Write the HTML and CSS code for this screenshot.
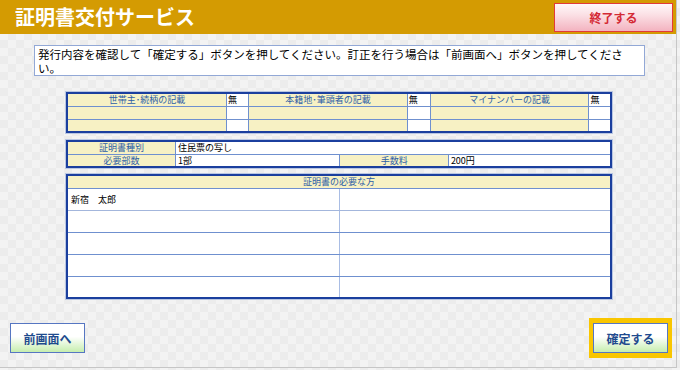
FILE: index.html
```html
<!DOCTYPE html>
<html lang="ja">

    <head>
        <meta charset="UTF-8">
        <title>証明書交付サービス</title>
        <link rel="stylesheet" href="styles.css">
    </head>

    <body>
        <div class="screen">
            <header class="title-bar">
                <h1 class="title">証明書交付サービス</h1>
                <button class="btn-exit">終了する</button>
            </header>

            <p class="message">発行内容を確認して「確定する」ボタンを押してください。訂正を行う場合は「前画面へ」ボタンを押してください。</p>

            <!-- 記載事項 -->
            <table class="grid grid-notes">
                <colgroup>
                    <col style="width: 159px">
                    <col style="width: 22px">
                    <col style="width: 158px">
                    <col style="width: 23px">
                    <col style="width: 158px">
                    <col style="width: 22px">
                </colgroup>
                <tr>
                    <th>世帯主･続柄の記載</th>
                    <td class="flag">無</td>
                    <th>本籍地･筆頭者の記載</th>
                    <td class="flag">無</td>
                    <th>マイナンバーの記載</th>
                    <td class="flag">無</td>
                </tr>
                <tr>
                    <td class="fill"></td>
                    <td></td>
                    <td class="fill"></td>
                    <td></td>
                    <td class="fill"></td>
                    <td></td>
                </tr>
                <tr>
                    <td class="fill"></td>
                    <td></td>
                    <td class="fill"></td>
                    <td></td>
                    <td class="fill"></td>
                    <td></td>
                </tr>
            </table>

            <!-- 証明書の内容 -->
            <table class="grid grid-cert">
                <colgroup>
                    <col style="width: 108px">
                    <col style="width: 164px">
                    <col style="width: 108px">
                    <col style="width: 162px">
                </colgroup>
                <tr>
                    <th>証明書種別</th>
                    <td colspan="3">住民票の写し</td>
                </tr>
                <tr>
                    <th>必要部数</th>
                    <td>1部</td>
                    <th>手数料</th>
                    <td>200円</td>
                </tr>
            </table>

            <!-- 必要な方 -->
            <table class="grid grid-people">
                <tr>
                    <th colspan="2">証明書の必要な方</th>
                </tr>
                <tr class="first">
                    <td>新宿　太郎</td>
                    <td></td>
                </tr>
                <tr>
                    <td></td>
                    <td></td>
                </tr>
                <tr>
                    <td></td>
                    <td></td>
                </tr>
                <tr>
                    <td></td>
                    <td></td>
                </tr>
                <tr>
                    <td></td>
                    <td></td>
                </tr>
            </table>

            <footer class="actions">
                <button class="btn">前画面へ</button>
                <div class="confirm-frame">
                    <button class="btn">確定する</button>
                </div>
            </footer>
        </div>
    </body>

</html>
```

FILE: styles.css
```css
* {
    padding: 0;
    margin: 0;
    box-sizing: border-box;
}

body {
    width: 677px;
    height: 368px;
    border-right: 1px solid #c6c6c6;
    border-bottom: 1px solid #c6c6c6;
    background: repeating-conic-gradient(#ececec 0 25%, #f3f3f3 0 50%) 0 0 / 16px 16px;
    font-family: "Noto Sans CJK JP", sans-serif;
    color: #000;
}

.screen {
    height: 367px;
    display: flex;
    flex-direction: column;
}

/* header */
.title-bar {
    height: 34px;
    flex-shrink: 0;
    display: flex;
    justify-content: space-between;
    align-items: flex-start;
    padding: 3px 3px 0 15px;
    background-color: #d49b02;
}

.title {
    font-size: 20px;
    font-weight: bold;
    line-height: 28px;
    color: #fff;
}

.btn-exit {
    width: 119px;
    height: 29px;
    border: 1px solid #e23a3a;
    background: linear-gradient(#fff8f9 0%, #fbe0e5 40%, #f3b3c0 100%);
    color: #d42a35;
    font-family: inherit;
    font-size: 12px;
    font-weight: bold;
}

/* message */
.message {
    width: 611px;
    height: 31px;
    margin: 11px 0 0 34px;
    padding: 1px 3px;
    border: 1px solid #92a8d6;
    background-color: #fff;
    font-size: 11.5px;
    line-height: 14px;
}

/* tables */
.grid {
    width: 546px;
    margin-left: 66px;
    border-collapse: collapse;
    table-layout: fixed;
    border: 2px solid #1b3f9e;
    box-shadow: 0 0 0 1px #b9c6e2;
    background-color: #fff;
    font-size: 9px;
}

.grid th,
.grid td {
    border: 1px solid #6f90cf;
    padding: 0 2px;
    height: 13px;
    line-height: 11px;
    text-align: left;
    white-space: nowrap;
    overflow: hidden;
}

.grid th {
    background-color: #f7f1c4;
    color: #2d5ea6;
    font-weight: normal;
    text-align: center;
}

.grid .fill {
    background-color: #f7f1c4;
}

.grid-notes {
    margin-top: 16px;
}

.grid-notes .flag {
    padding-left: 1px;
}

.grid-cert {
    margin-top: 7px;
}

.grid-people {
    margin-top: 6px;
}

.grid-people td {
    height: 22px;
    width: 50%;
    padding-left: 3px;
}

.grid-people td:first-child {
    border-right-color: #a9bde4;
}

.grid-people .first td {
    border-bottom-color: #a3b6dc;
}

/* bottom buttons */
.actions {
    margin-top: auto;
    display: flex;
    justify-content: space-between;
    align-items: center;
    padding: 0 4px 9px 10px;
}

.btn {
    width: 75px;
    height: 30px;
    border: 1px solid #5676c2;
    background: linear-gradient(#fff 0%, #fff 45%, #c6eeae 100%);
    color: #1f4b8e;
    font-family: inherit;
    font-size: 12px;
    font-weight: bold;
}

.confirm-frame {
    padding: 5px 4px;
    background-color: #f9c600;
}

.confirm-frame .btn {
    display: block;
}
```
